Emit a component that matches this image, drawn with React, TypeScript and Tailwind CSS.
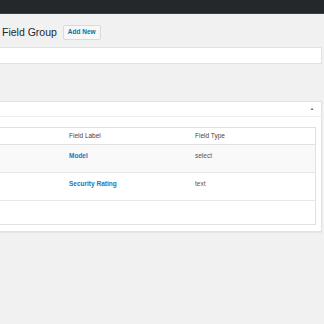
import React from 'react';

const rows = [
  { label: 'Model', type: 'select', shade: true },
  { label: 'Security Rating', type: 'text', shade: false },
];

const App: React.FC = () => {
  return (
    <div className="w-[324px] h-[324px] overflow-hidden bg-[#f1f1f1] font-['Liberation_Sans',Arial,sans-serif]">
      <div className="h-[14px] bg-[#23282d] border-b border-[#3a3f44]" />

      <div className="flex items-center gap-[6px] pl-[2px] mt-[10px] h-[16px]">
        <h1 className="text-[10.5px] leading-none text-[#23282d]">Field Group</h1>
        <span className="h-[15px] px-[4px] flex items-center border border-[#d5dbe0] bg-[#f7f7f7] rounded-[2px] text-[6.5px] font-semibold text-[#0073aa]">
          Add New
        </span>
      </div>

      <div className="mt-[7px] -ml-px w-[323px] h-[17px] bg-white border border-[#e2e2e2]" />

      <div className="mt-[37px] -ml-[10px] w-[332px] bg-white border border-[#e2e2e2] shadow-[0_1px_1px_rgba(0,0,0,0.04)]">
        <div className="h-[15px] flex items-center justify-end pr-[7px] border-b border-[#eeeeee]">
          <span className="text-[4px] text-[#555]">▲</span>
        </div>
        <div className="pt-[10px] pb-[6px] pl-[2px] pr-[5px]">
          <div className="border border-[#e1e1e1]">
            <div className="h-[17px] flex items-center border-b border-[#e1e1e1] text-[6.5px] text-[#444]">
              <span className="w-[75px]" />
              <span className="w-[126px]">Field Label</span>
              <span>Field Type</span>
            </div>
            {rows.map((r) => (
              <div
                key={r.label}
                className={`h-[28px] flex items-start pt-[6px] border-b border-[#e8e8e8] text-[6.5px] ${r.shade ? 'bg-[#f9f9f9]' : 'bg-white'}`}
              >
                <span className="w-[75px]" />
                <span className="w-[126px] font-bold text-[#1e73be]">{r.label}</span>
                <span className="text-[#555]">{r.type}</span>
              </div>
            ))}
            <div className="h-[23px] bg-white" />
          </div>
        </div>
      </div>
    </div>
  );
};

export default App;
